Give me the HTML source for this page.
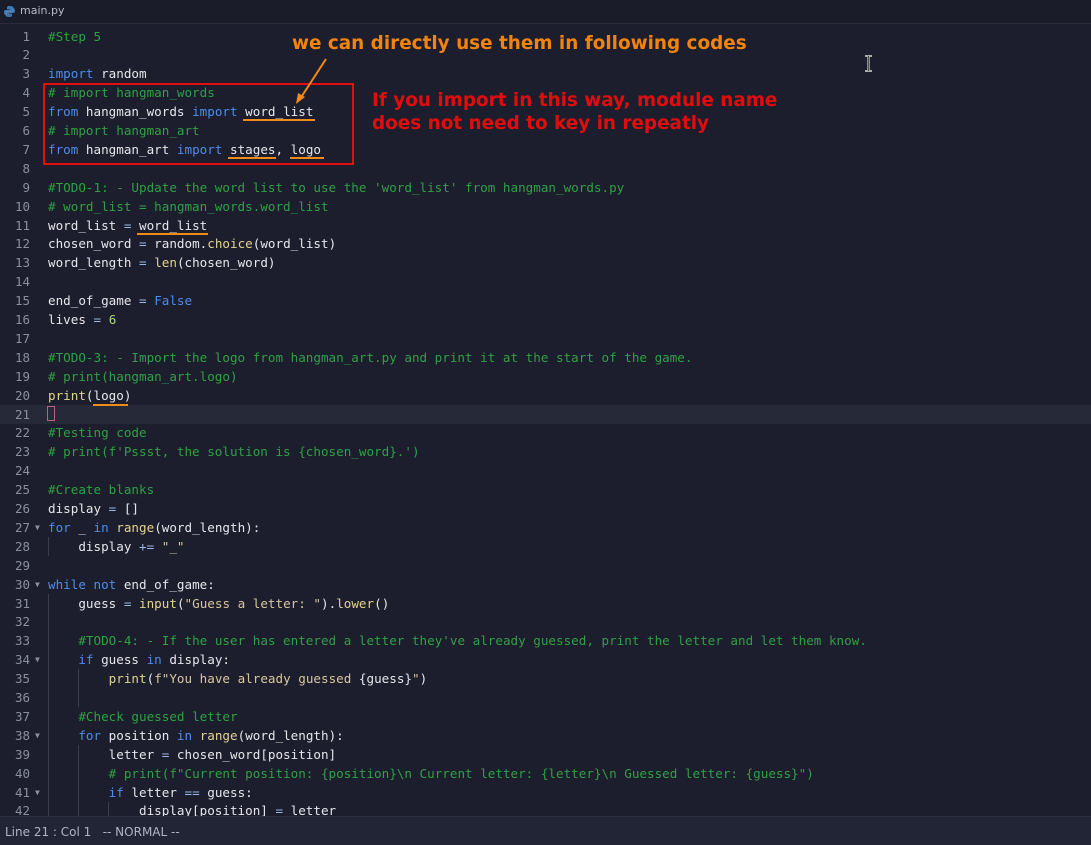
<!DOCTYPE html><html><head><meta charset="utf-8"><style>
body{margin:0;width:1091px;height:844px;background:#1c1e2d;overflow:hidden;position:relative;font-family:"DejaVu Sans Mono","Liberation Mono",monospace;}
.top{position:absolute;left:0;top:0;width:1091px;height:23px;background:#1a1c2a;border-bottom:1px solid #2a2d3d;}
.top span{position:absolute;left:20px;top:4px;font:11px "DejaVu Sans",sans-serif;color:#b8bcc8;}
.ln{position:absolute;left:0;width:30px;text-align:right;font-size:12.5px;color:#8a8f9e;line-height:19px;}
.c{position:absolute;left:48px;font-size:12.6px;color:#e6e6ea;line-height:19px;white-space:pre;}
.k{color:#4f8ce8}.m{color:#2fa043}.f{color:#e3d48f}.s{color:#d8c69c}.n{color:#a8d872}.o{color:#9ab8e8}
.fold{position:absolute;left:35px;font-size:8px;color:#8a8f9e;}
.g{position:absolute;width:1px;background:#3a3d50;}
.u{position:absolute;height:2px;background:#f08a18;}
.an{position:absolute;font-family:"DejaVu Sans",sans-serif;font-weight:bold;font-size:18.4px;white-space:nowrap;}
</style></head><body>
<div class="top"><svg style="position:absolute;left:3px;top:5px" width="13" height="13" viewBox="0 0 13 13"><path d="M6.5 1C4 1 4 2 4 3v1.5h3v.5H2.5C1 5 1 6.5 1 7.5S1.5 10 3 10h1V8.5C4 7.5 5 7 6 7h3c1 0 1.5-.5 1.5-1.5V3C10.5 1.5 9 1 6.5 1z" fill="#3b7ab0"/><path d="M6.5 12c2.5 0 2.5-1 2.5-2V8.5H6V8h4.5C12 8 12 6.5 12 5.5S11.5 3 10 3H9v1.5C9 5.5 8 6 7 6H4c-1 0-1.5.5-1.5 1.5V10c0 1.5 1.5 2 4 2z" fill="#4a8ac0" opacity=".8"/></svg><span>main.py</span></div>
<div style="position:absolute;left:0;top:405px;width:1091px;height:19px;background:#262938"></div>
<div style="position:absolute;left:47px;top:406px;width:8px;height:15px;border:1px solid #c0607a;box-sizing:border-box"></div>
<div id="code"></div>
<div class="g" style="left:48px;top:537px;height:19px"></div>
<div class="g" style="left:48px;top:594px;height:222px"></div>
<div class="g" style="left:78px;top:669px;height:38px"></div>
<div class="g" style="left:78px;top:745px;height:71px"></div>
<div class="g" style="left:108px;top:802px;height:14px"></div>
<div style="position:absolute;left:43px;top:83px;width:311px;height:82px;border:2px solid #e01010;box-sizing:border-box"></div>
<div class="u" style="left:243px;top:119px;width:72px"></div>
<div class="u" style="left:228px;top:157px;width:48px"></div>
<div class="u" style="left:290px;top:157px;width:34px"></div>
<div class="u" style="left:137px;top:233px;width:71px"></div>
<div class="u" style="left:93px;top:404px;width:35px"></div>
<svg style="position:absolute;left:290px;top:55px" width="40" height="52"><path d="M36 4 L10 44" stroke="#f08a18" stroke-width="2"/><path d="M6 49 L8 38 L15 42 Z" fill="#f08a18"/></svg>
<div class="an" style="left:292px;top:33px;color:#f0840f">we can directly use them in following codes</div>
<div class="an" style="left:372px;top:89px;color:#e00d0d;line-height:23px">If you import in this way, module name<br>does not need to key in repeatly</div>
<svg style="position:absolute;left:864px;top:55px" width="9" height="17"><path d="M1 1h7M1 16h7M4.5 1v15" stroke="#fff" stroke-width="2"/><path d="M1 1h7M1 16h7M4.5 1v15" stroke="#222" stroke-width=".8"/></svg>
<script>
const L=[
'<span class="m">#Step 5</span>','',
'<span class="k">import</span> random',
'<span class="m"># import hangman_words</span>',
'<span class="k">from</span> hangman_words <span class="k">import</span> word_list',
'<span class="m"># import hangman_art</span>',
'<span class="k">from</span> hangman_art <span class="k">import</span> stages, logo','',
'<span class="m">#TODO-1: - Update the word list to use the \'word_list\' from hangman_words.py</span>',
'<span class="m"># word_list = hangman_words.word_list</span>',
'word_list <span class="o">=</span> word_list',
'chosen_word <span class="o">=</span> random.<span class="f">choice</span>(word_list)',
'word_length <span class="o">=</span> <span class="f">len</span>(chosen_word)','',
'end_of_game <span class="o">=</span> <span class="k">False</span>',
'lives <span class="o">=</span> <span class="n">6</span>','',
'<span class="m">#TODO-3: - Import the logo from hangman_art.py and print it at the start of the game.</span>',
'<span class="m"># print(hangman_art.logo)</span>',
'<span class="f">print</span>(logo)','',
'<span class="m">#Testing code</span>',
'<span class="m"># print(f\'Pssst, the solution is {chosen_word}.\')</span>','',
'<span class="m">#Create blanks</span>',
'display <span class="o">=</span> []',
'<span class="k">for</span> _ <span class="k">in</span> <span class="f">range</span>(word_length):',
'    display <span class="o">+=</span> <span class="s">"_"</span>','',
'<span class="k">while</span> <span class="k">not</span> end_of_game:',
'    guess <span class="o">=</span> <span class="f">input</span>(<span class="s">"Guess a letter: "</span>).<span class="f">lower</span>()','',
'    <span class="m">#TODO-4: - If the user has entered a letter they\'ve already guessed, print the letter and let them know.</span>',
'    <span class="k">if</span> guess <span class="k">in</span> display:',
'        <span class="f">print</span>(<span class="s">f"You have already guessed </span>{guess}<span class="s">"</span>)','',
'    <span class="m">#Check guessed letter</span>',
'    <span class="k">for</span> position <span class="k">in</span> <span class="f">range</span>(word_length):',
'        letter <span class="o">=</span> chosen_word[position]',
'        <span class="m"># print(f"Current position: {position}\\n Current letter: {letter}\\n Guessed letter: {guess}")</span>',
'        <span class="k">if</span> letter <span class="o">==</span> guess:',
'            display[position] <span class="o">=</span> letter'];
const folds=[27,30,34,38,41];let h='';
L.forEach((t,i)=>{const y=(26.5+i*18.9).toFixed(1);h+=`<div class="ln" style="top:${y}px">${i+1}</div><div class="c" style="top:${y}px">${t}</div>`;if(folds.includes(i+1))h+=`<div class="fold" style="top:${(+y+5).toFixed(1)}px">▼</div>`;});
document.getElementById('code').innerHTML=h;
</script>
<div style="position:absolute;left:0;top:816px;width:1091px;height:28px;background:#222536;border-top:1px solid #2b2e40;font:12px 'DejaVu Sans',sans-serif;color:#b0b4c0;"><span style="position:absolute;left:5px;top:8px">Line 21 : Col 1 &nbsp; -- NORMAL --</span></div>
</body></html>
